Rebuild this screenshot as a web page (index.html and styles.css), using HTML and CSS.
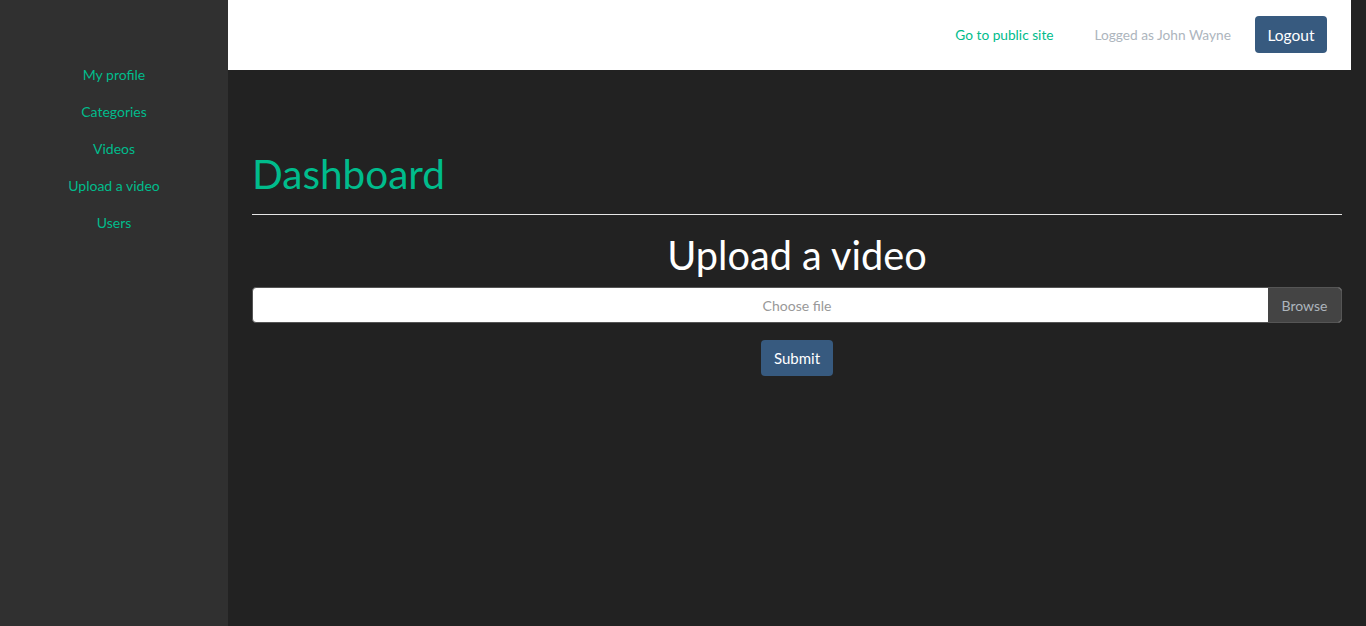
FILE: index.html
```html
<!DOCTYPE html>
<html lang="en">
<head>
<meta charset="utf-8">
<title>Dashboard</title>
<link rel="stylesheet" href="styles.css">
</head>
<body>
<div class="layout">
  <aside class="sidebar">
    <nav class="side-nav">
      <a href="#" class="side-link">My profile</a>
      <a href="#" class="side-link">Categories</a>
      <a href="#" class="side-link">Videos</a>
      <a href="#" class="side-link">Upload a video</a>
      <a href="#" class="side-link">Users</a>
    </nav>
  </aside>
  <div class="main">
    <header class="topbar">
      <a href="#" class="public-link">Go to public site</a>
      <span class="logged">Logged as John Wayne</span>
      <button class="btn btn-primary logout">Logout</button>
    </header>
    <section class="content">
      <h1 class="page-title">Dashboard</h1>
      <hr class="divider">
      <h2 class="section-title">Upload a video</h2>
      <form class="upload-form">
        <div class="file-input">
          <span class="file-label">Choose file</span>
          <span class="file-browse">Browse</span>
        </div>
        <button type="button" class="btn btn-primary submit">Submit</button>
      </form>
    </section>
  </div>
</div>
</body>
</html>
```
FILE: styles.css
```css
* { box-sizing: border-box; }
html, body { margin: 0; padding: 0; height: 100%; }
body {
  background: #222222;
  font-family: Lato, "Open Sans", "Liberation Sans", sans-serif;
  font-size: 14px;
  line-height: 1.5;
  color: #ffffff;
  overflow: hidden;
}
.layout { display: flex; height: 100vh; }
.sidebar {
  width: 228px;
  flex: 0 0 228px;
  background: #303030;
  padding-top: 56px;
}
.side-nav { display: flex; flex-direction: column; align-items: center; }
.side-link {
  display: block;
  padding: 8px 16px;
  color: #00bc8c;
  text-decoration: none;
  font-size: 14px;
  line-height: 21px;
}
.main { flex: 1; display: flex; flex-direction: column; min-width: 0; }
.topbar {
  height: 70px;
  background: #ffffff;
  margin-right: 15px;
  display: flex;
  align-items: center;
  justify-content: flex-end;
  padding: 0 24px 1px 0;
}
.public-link {
  color: #00bc8c;
  text-decoration: none;
  font-size: 13.7px;
  margin-right: 41px;
  padding-top: 2px;
}
.logged {
  color: #adb5bd;
  font-size: 13.7px;
  margin-right: 24px;
  padding-top: 2px;
}
.btn {
  font-family: inherit;
  border: none;
  border-radius: 4px;
  cursor: pointer;
  color: #ffffff;
}
.btn-primary { background: #375a7f; }
.logout {
  height: 37px;
  padding: 1px 12.5px 0;
  font-size: 15.5px;
  line-height: 36px;
}
.content { padding: 0 24px; }
.page-title {
  margin: 80px 0 16px;
  font-size: 40.5px;
  font-weight: 400;
  line-height: 48px;
  color: #00bc8c;
}
.divider {
  margin: 0;
  border: none;
  border-top: 1px solid #e6e6e6;
  height: 0;
}
.section-title {
  margin: 16px 0 8px;
  font-size: 39.7px;
  font-weight: 400;
  line-height: 48px;
  text-align: center;
  color: #ffffff;
}
.upload-form { display: flex; flex-direction: column; align-items: center; }
.file-input {
  position: relative;
  width: 100%;
  height: 36px;
  display: flex;
  align-items: center;
  justify-content: center;
  background: #ffffff;
  border-radius: 4px;
  border: 1px solid #555555;
  overflow: hidden;
}
.file-label {
  color: #999999;
  font-size: 14px;
}
.file-browse {
  position: absolute;
  top: 0;
  right: 0;
  bottom: 0;
  width: 73px;
  background: #444444;
  color: #adb5bd;
  display: flex;
  align-items: center;
  justify-content: center;
  font-size: 14px;
}
.submit {
  margin-top: 17px;
  height: 36px;
  padding: 0 13px;
  font-size: 15px;
}
```
